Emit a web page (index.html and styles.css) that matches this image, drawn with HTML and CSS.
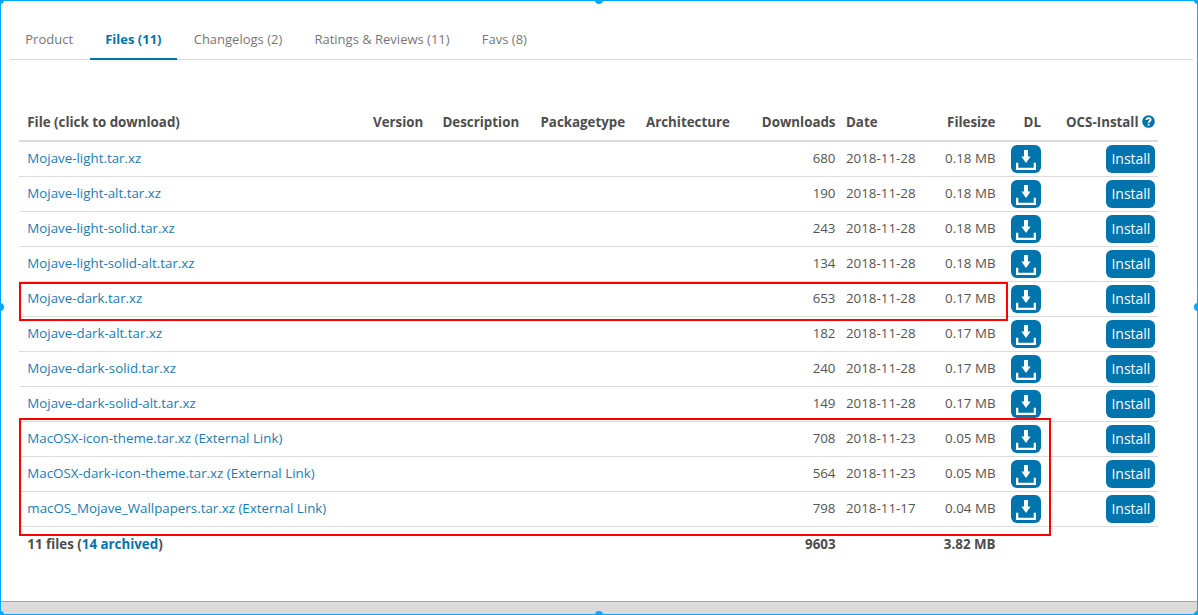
FILE: index.html
```
<!DOCTYPE html>
<html lang="en">
<head>
<meta charset="utf-8">
<title>Files</title>
<link rel="stylesheet" href="styles.css">
</head>
<body>
<svg class="defs" aria-hidden="true">
  <symbol id="dl" viewBox="0 0 30 28">
    <path d="M13 5h4v6.500h2.600L15 18l-4.600-6.500H13z"/>
    <path d="M5 17.700h2.300V22.700H22.700V17.700H25V25H5z"/>
  </symbol>
</svg>
<div class="page">
  <nav class="tabs">
    <a class="tab">Product</a>
    <a class="tab active">Files (11)</a>
    <a class="tab">Changelogs (2)</a>
    <a class="tab">Ratings &amp; Reviews (11)</a>
    <a class="tab">Favs (8)</a>
  </nav>
  <main class="files">
    <div class="row head">
      <span class="name">File (click to download)</span><span>Version</span><span>Description</span><span>Packagetype</span><span>Architecture</span><span class="num">Downloads</span><span class="date">Date</span><span class="num">Filesize</span><span class="num">DL</span><span class="ocs">OCS-Install <svg class="help" viewBox="0 0 13 13"><circle cx="6.500" cy="6.500" r="6.300"/><path d="M4.500 5.100C4.500 2.500 8.600 2.700 8.600 4.800C8.600 6.300 6.600 6.200 6.600 7.700M6.600 8.700V10.500"/></svg></span>
    </div>
    <div class="row"><a class="name">Mojave-light.tar.xz</a><span class="num downloads">680</span><span class="date">2018-11-28</span><span class="num">0.18 MB</span><a class="dl"><svg><use href="#dl"/></svg></a><a class="install">Install</a></div>
    <div class="row"><a class="name">Mojave-light-alt.tar.xz</a><span class="num downloads">190</span><span class="date">2018-11-28</span><span class="num">0.18 MB</span><a class="dl"><svg><use href="#dl"/></svg></a><a class="install">Install</a></div>
    <div class="row"><a class="name">Mojave-light-solid.tar.xz</a><span class="num downloads">243</span><span class="date">2018-11-28</span><span class="num">0.18 MB</span><a class="dl"><svg><use href="#dl"/></svg></a><a class="install">Install</a></div>
    <div class="row"><a class="name">Mojave-light-solid-alt.tar.xz</a><span class="num downloads">134</span><span class="date">2018-11-28</span><span class="num">0.18 MB</span><a class="dl"><svg><use href="#dl"/></svg></a><a class="install">Install</a></div>
    <div class="row"><a class="name">Mojave-dark.tar.xz</a><span class="num downloads">653</span><span class="date">2018-11-28</span><span class="num">0.17 MB</span><a class="dl"><svg><use href="#dl"/></svg></a><a class="install">Install</a></div>
    <div class="row"><a class="name">Mojave-dark-alt.tar.xz</a><span class="num downloads">182</span><span class="date">2018-11-28</span><span class="num">0.17 MB</span><a class="dl"><svg><use href="#dl"/></svg></a><a class="install">Install</a></div>
    <div class="row"><a class="name">Mojave-dark-solid.tar.xz</a><span class="num downloads">240</span><span class="date">2018-11-28</span><span class="num">0.17 MB</span><a class="dl"><svg><use href="#dl"/></svg></a><a class="install">Install</a></div>
    <div class="row"><a class="name">Mojave-dark-solid-alt.tar.xz</a><span class="num downloads">149</span><span class="date">2018-11-28</span><span class="num">0.17 MB</span><a class="dl"><svg><use href="#dl"/></svg></a><a class="install">Install</a></div>
    <div class="row"><a class="name">MacOSX-icon-theme.tar.xz (External Link)</a><span class="num downloads">708</span><span class="date">2018-11-23</span><span class="num">0.05 MB</span><a class="dl"><svg><use href="#dl"/></svg></a><a class="install">Install</a></div>
    <div class="row"><a class="name">MacOSX-dark-icon-theme.tar.xz (External Link)</a><span class="num downloads">564</span><span class="date">2018-11-23</span><span class="num">0.05 MB</span><a class="dl"><svg><use href="#dl"/></svg></a><a class="install">Install</a></div>
    <div class="row"><a class="name">macOS_Mojave_Wallpapers.tar.xz (External Link)</a><span class="num downloads">798</span><span class="date">2018-11-17</span><span class="num">0.04 MB</span><a class="dl"><svg><use href="#dl"/></svg></a><a class="install">Install</a></div>
    <div class="row total"><span class="name">11 files (<a>14 archived</a>)</span><span class="num downloads">9603</span><span></span><span class="num">3.82 MB</span></div>
  </main>
  <footer class="footer"></footer>
  <div class="mark mark-dark"></div>
  <div class="mark mark-links"></div>
  <div class="selection">
    <i class="handle top left"></i><i class="handle top center"></i><i class="handle top right"></i>
    <i class="handle middle left"></i><i class="handle middle right"></i>
    <i class="handle bottom left"></i><i class="handle bottom center"></i><i class="handle bottom right"></i>
  </div>
</div>
</body>
</html>
```
FILE: styles.css
```
* { box-sizing: border-box; }
body { margin: 0; background: #fff; color: #555; font: 13px/20px "Open Sans", sans-serif; }
.defs { position: absolute; width: 0; height: 0; }
.page { position: relative; height: 615px; overflow: hidden; display: flex; flex-direction: column; }

.tabs { display: flex; height: 60px; margin: 0 5px 0 10px; padding-top: 20px; border-bottom: 1px solid #dbdbdb; }
.tab { height: 40px; padding: 9px 15px 0 15.300px; margin-right: 1.900px; color: #777; white-space: nowrap; }
.tab.active { border-bottom: 2px solid #0074ad; color: #0074ad; font-weight: 700; }

.files { width: 1139px; margin: 42px 0 0 19px; flex: 1; font-size: 13.330px; }
.row {
  display: grid;
  grid-template-columns: 354px 69.500px 98px 105.500px 95px 94.500px 95px 65px 45.500px 114px;
  height: 35px; padding-top: 6px; border-bottom: 1px solid #dbdbdb; white-space: nowrap;
}
.row.head { height: 40px; padding-top: 10px; border-bottom: 2px solid #dbdbdb; color: #4d4d4d; font-weight: 700; }
.row.total { border: 0; padding-top: 7px; color: #4d4d4d; font-weight: 700; }
.name { padding-left: 8.300px; }
a.name { color: #1a7cb3; }
.total a { color: #0074ad; }
.num { text-align: right; }
.downloads { grid-column: 6; }
.date { padding-left: 10.500px; }
.ocs { display: flex; justify-content: flex-end; gap: 3.500px; }
.help { width: 13px; height: 13px; margin-top: 3px; fill: #0074ad; }
.help path { fill: none; stroke: #fff; stroke-width: 1.800; }

.dl, .install { justify-self: end; height: 28px; margin-top: -3px; border-radius: 6px; background: #0074ad; color: #fff; }
.dl { width: 30px; }
.dl svg { display: block; width: 30px; height: 28px; fill: #fff; }
.install { width: 49px; padding-left: 0.800px; font-size: 14px; line-height: 28px; text-align: center; }

.footer { height: 14px; border-top: 1px solid #a6a6a6; background: #dbdbdb; }

/* Annotation boxes laid over the table */
.mark { position: absolute; border: 2px solid #f00; }
.mark-dark { left: 19px; top: 282px; width: 989px; height: 39px; }
.mark-links { left: 19px; top: 418px; width: 1032px; height: 118px; }

/* Selection frame around the whole view */
.selection { position: absolute; inset: 0; border: 1px solid #00a8ff; }
.handle { position: absolute; width: 8px; height: 8px; border-radius: 50%; background: #00a8ff; }
.top { top: -5px; }
.middle { top: 302px; }
.bottom { bottom: -5px; }
.left { left: -5px; }
.center { left: 594px; }
.right { right: -5px; }
```
